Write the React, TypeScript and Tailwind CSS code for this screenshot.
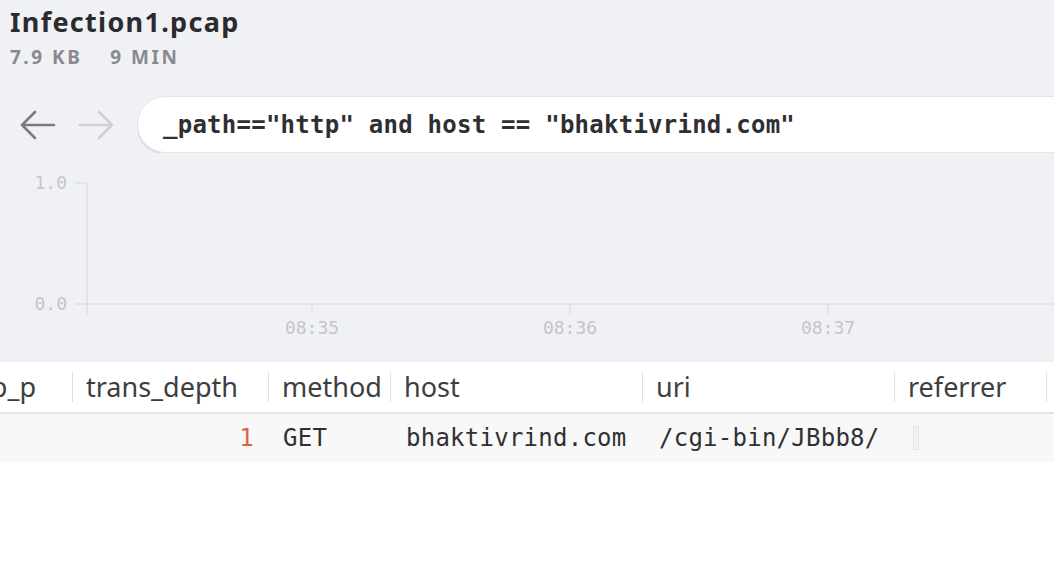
const cols = 'grid grid-cols-[73px_196px_122px_252px_252px_152px_200px]';

function Arrow({ dir, color }: { dir: 'left' | 'right'; color: string }) {
  const d = dir === 'left' ? 'M34 15H2 M15 2 L2 15 L15 28' : 'M2 15H34 M21 2 L34 15 L21 28';
  return (
    <svg width="36" height="30" viewBox="0 0 36 30" fill="none">
      <path d={d} stroke={color} strokeWidth="2.6" strokeLinecap="round" strokeLinejoin="round" />
    </svg>
  );
}

function Chart() {
  const ticks = [
    { x: 312, label: '08:35' },
    { x: 570, label: '08:36' },
    { x: 828, label: '08:37' },
  ];
  return (
    <svg width="1054" height="185" viewBox="0 0 1054 185" className="block">
      <g stroke="#dedfe3" strokeWidth="1.5">
        <line x1="75" y1="18" x2="87" y2="18" />
        <line x1="87" y1="18" x2="87" y2="150" />
        <line x1="75" y1="139" x2="1054" y2="139" />
        {ticks.map((t) => (
          <line key={t.x} x1={t.x} y1="139" x2={t.x} y2="149" />
        ))}
      </g>
      <g fill="#c4c5c9" fontFamily="'DejaVu Sans Mono', monospace" fontSize="18">
        <text x="67" y="24" textAnchor="end">1.0</text>
        <text x="67" y="145" textAnchor="end">0.0</text>
        {ticks.map((t) => (
          <text key={t.label} x={t.x} y="169" textAnchor="middle">{t.label}</text>
        ))}
      </g>
    </svg>
  );
}

export default function App() {
  const headers = ['id.resp_p', 'trans_depth', 'method', 'host', 'uri', 'referrer', ''];
  return (
    <div className="w-[1054px] h-[576px] overflow-hidden bg-white font-['Noto_Sans',sans-serif]">
      <div className="bg-[#f0f1f5] pt-[6px] pb-[12px]">
        <div className="px-[10px]">
          <h1 className="text-[27px] leading-[32px] font-bold text-[#2b2b2d] tracking-[1.3px]">Infection1.pcap</h1>
          <div className="flex gap-[28px] text-[19px] leading-[22px] font-bold text-[#8a8a8e] tracking-[2.5px] mt-[8px]">
            <span>7.9 KB</span>
            <span>9 MIN</span>
          </div>
        </div>

        <div className="flex items-center mt-[28px] overflow-hidden">
          <div className="flex items-center gap-[22px] pl-[20px] pr-[23px]">
            <Arrow dir="left" color="#7b7b7f" />
            <Arrow dir="right" color="#cfd0d4" />
          </div>
          <div className="w-[1000px] shrink-0 h-[57px] rounded-l-full bg-white border border-[#e4e5e9] shadow-[0_2px_0_#dcdde1] flex items-center pl-[25px]">
            <span className="font-['DejaVu_Sans_Mono',monospace] text-[24px] font-semibold text-[#2f2f31] tracking-[0.25px] whitespace-pre">
              _path=="http" and host == "bhaktivrind.com"
            </span>
          </div>
        </div>

        <div className="mt-[12px]">
          <Chart />
        </div>
      </div>

      <div className={`${cols} h-[52px] bg-white border-b-2 border-[#e3e3e6] text-[27px] text-[#3e3e40]`}>
        {headers.map((h, i) => (
          <div key={i} className="flex items-center overflow-hidden">
            <div className={`flex-1 flex items-center leading-[44px] overflow-hidden whitespace-nowrap ${i === 0 ? 'justify-end pr-[36px]' : 'pl-[13px]'}`}>
              {h}
            </div>
            <div className="w-px h-[30px] shrink-0 bg-[#dfe0e4]" />
          </div>
        ))}
      </div>

      <div className={`${cols} h-[48px] bg-[#f8f8f9] items-center font-['DejaVu_Sans_Mono',monospace] text-[24px] tracking-[0.25px] text-[#303032]`}>
        <div />
        <div className="text-right pr-[15px] text-[#e0613f]">1</div>
        <div className="pl-[14px]">GET</div>
        <div className="pl-[15px]">bhaktivrind.com</div>
        <div className="pl-[16px]">/cgi-bin/JBbb8/</div>
        <div className="pl-[18px] flex items-center">
          <div className="w-[6px] h-[24px] border border-[#e4e4e6] bg-[#f2f2f3]" />
        </div>
        <div />
      </div>
    </div>
  );
}
